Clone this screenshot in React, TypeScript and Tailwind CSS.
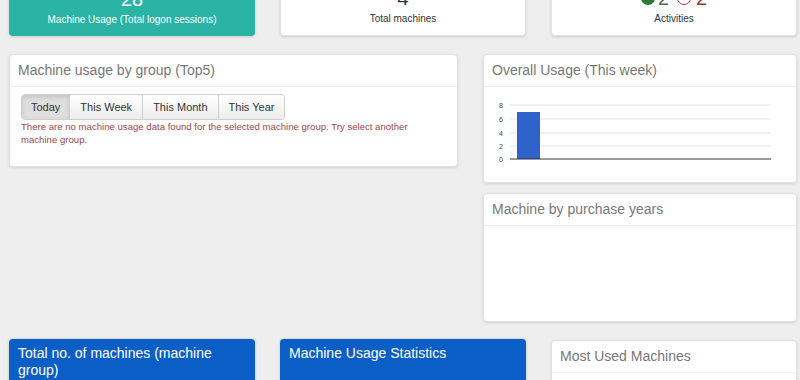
import React from "react";

const panel =
  "rounded-[4px] border border-[#e2e2e2] bg-white shadow-[0_1px_3px_rgba(0,0,0,0.12)]";

function StatCard({
  tone,
  label,
  children,
}: {
  tone: "teal" | "white";
  label: string;
  children: React.ReactNode;
}) {
  const base =
    tone === "teal"
      ? "bg-[#2bb3a5] text-white"
      : "bg-white text-[#333] border border-[#e2e2e2]";
  return (
    <div
      className={`flex h-[76px] flex-col items-center justify-end rounded-[4px] pb-[10px] shadow-[0_1px_3px_rgba(0,0,0,0.15)] ${base}`}
    >
      <div className="mb-[5px] flex h-[20px] items-center text-[20px] leading-none">
        {children}
      </div>
      <div className="text-[10px] leading-[12px]">{label}</div>
    </div>
  );
}

function PanelHeader({ title }: { title: string }) {
  return (
    <div className="flex h-[32px] items-center border-b border-[#eeeeee] px-[8px] text-[14px] text-[#777]">
      {title}
    </div>
  );
}

function UsageChart() {
  const ticks = [
    { v: "8", y: 18 },
    { v: "6", y: 32 },
    { v: "4", y: 46 },
    { v: "2", y: 59 },
  ];
  return (
    <svg width="312" height="96" className="block">
      {ticks.map((t) => (
        <g key={t.v}>
          <line x1="26" x2="287" y1={t.y} y2={t.y} stroke="#e4e4e4" strokeWidth="1" />
          <text x="19" y={t.y + 2.5} fontSize="7" fill="#444" textAnchor="end" fontFamily="Liberation Sans, Arial, sans-serif">
            {t.v}
          </text>
        </g>
      ))}
      <rect x="33" y="25" width="23" height="47" fill="#2f63cc" />
      <line x1="26" x2="287" y1="72" y2="72" stroke="#333" strokeWidth="1" />
      <text x="19" y="74.5" fontSize="7" fill="#444" textAnchor="end" fontFamily="Liberation Sans, Arial, sans-serif">
        0
      </text>
    </svg>
  );
}

export default function App() {
  const ranges = ["Today", "This Week", "This Month", "This Year"];
  return (
    <div className="h-[380px] overflow-hidden bg-[#eeeeee] pl-[9px] pr-[3px] font-['Liberation_Sans',Arial,sans-serif]">
      {/* top stat cards */}
      <div className="-mt-[40px] grid grid-cols-3 gap-x-[25px]">
        <StatCard tone="teal" label="Machine Usage (Total logon sessions)">
          28
        </StatCard>
        <StatCard tone="white" label="Total machines">
          4
        </StatCard>
        <StatCard tone="white" label="Activities">
          <span className="size-[14px] rounded-full bg-[#2f7a35]" />
          <span className="ml-[3px] text-[#4d6b4f]">2</span>
          <span className="ml-[8px] size-[14px] rounded-full border-[1.5px] border-[#b23b3b]" />
          <span className="ml-[5px] text-[#8e3a3a]">2</span>
        </StatCard>
      </div>

      {/* middle row */}
      <div className="mt-[18px] flex items-start gap-[25px]">
        <div className={`w-[449px] ${panel}`}>
          <PanelHeader title="Machine usage by group (Top5)" />
          <div className="px-[11px] pb-[20px] pt-[7px]">
            <div className="inline-flex overflow-hidden rounded-[4px] border border-[#cfcfcf]">
              {ranges.map((r, i) => (
                <div
                  key={r}
                  className={`flex h-[24px] items-center text-[11px] text-[#333] ${
                    i > 0 ? "border-l border-[#cfcfcf]" : ""
                  } ${
                    i === 0
                      ? "bg-[#dedede] px-[9px] shadow-[inset_0_2px_4px_rgba(0,0,0,0.12)]"
                      : "bg-linear-to-b from-white to-[#ececec] px-[10px]"
                  }`}
                >
                  {r}
                </div>
              ))}
            </div>
            <p className="text-[9.6px] leading-[13px] text-[#a0474f]">
              There are no machine usage data found for the selected machine group. Try select another
              machine group.
            </p>
          </div>
        </div>

        <div className="flex flex-1 flex-col gap-[10px]">
          <div className={`h-[129px] ${panel}`}>
            <PanelHeader title="Overall Usage (This week)" />
            <UsageChart />
          </div>
          <div className={`h-[129px] ${panel}`}>
            <PanelHeader title="Machine by purchase years" />
          </div>
        </div>
      </div>

      {/* bottom row */}
      <div className="mt-[17px] grid grid-cols-3 gap-x-[25px]">
        <div className="h-[60px] rounded-t-[4px] bg-[#0b5ec6] px-[9px] pt-[6px] text-[14px] leading-[17px] text-white shadow-[0_0_3px_rgba(0,0,0,0.2)]">
          Total no. of machines (machine group)
        </div>
        <div className="h-[60px] rounded-t-[4px] bg-[#0b5ec6] px-[9px] pt-[6px] text-[14px] leading-[17px] text-white shadow-[0_0_3px_rgba(0,0,0,0.2)]">
          Machine Usage Statistics
        </div>
        <div className={`mt-[1px] h-[60px] ${panel}`}>
          <PanelHeader title="Most Used Machines" />
        </div>
      </div>
    </div>
  );
}
